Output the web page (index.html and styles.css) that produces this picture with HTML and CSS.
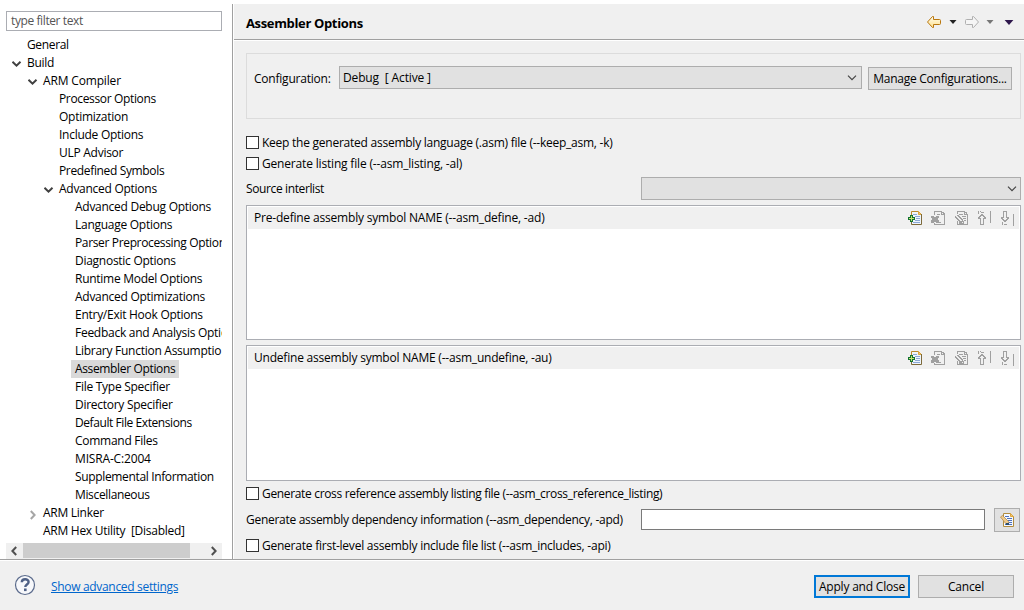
FILE: index.html
```
<!DOCTYPE html>
<html lang="en">
<head>
<meta charset="utf-8">
<title>Assembler Options</title>
<link rel="stylesheet" href="styles.css">
</head>
<body>
<svg class="defs" width="0" height="0" aria-hidden="true">
  <defs>
    <linearGradient id="gold" x1="0" y1="0" x2="0" y2="1"><stop offset="0" stop-color="#fffef0"/><stop offset="1" stop-color="#ffe08a"/></linearGradient>
    <symbol id="i-down" viewBox="0 0 10 6"><path d="M.5 .8 4.500 4.600 8.500 .8" fill="none" stroke="currentColor" stroke-width="2"/></symbol>
    <symbol id="i-combo" viewBox="0 0 10 6"><path d="M1 .7 5 4.7 9 .7" fill="none" stroke="currentColor" stroke-width="1.2"/></symbol>
    <symbol id="i-side" viewBox="0 0 6 10"><path d="M.8 1 4.6 5 .8 9" fill="none" stroke="currentColor" stroke-width="2"/></symbol>
    <symbol id="i-arrow" viewBox="0 0 16 14"><path d="M1.500 7 6.500 1.500h1v3h6q1 0 1 1v3q0 1-1 1h-6v3h-1z"/></symbol>
    <symbol id="i-tri" viewBox="0 0 8 4"><path d="M.5 0h7L4 4z" fill="currentColor"/></symbol>
    <symbol id="i-add" viewBox="-1 0 16 16">
      <path d="M3.500 1.500h7l3 3v10h-10z" fill="#eef5fd"/>
      <path d="M3.500 5V1.500h7" fill="none" stroke="#b98a2d"/><path d="M10.500 1.500v3h3z" fill="#f3c568" stroke="#dca640"/>
      <path d="M13.500 4v10.500h-10V12" fill="none" stroke="#7d6a3b"/>
      <path d="M5 4.500h4M7 6.500h5M8 8.500h4M7 10.500h5M5 12.500h7" stroke="#8ca8d4"/>
      <path d="M2 5h3v2h2v3H5v2H2v-2H0V7h2z" fill="#117131"/><path d="M3.500 6v5M1 8.500h5" stroke="#c7e36c"/>
    </symbol>
    <symbol id="i-del" viewBox="0 0 16 16" shape-rendering="crispEdges">
      <path d="M4.500 5V1.500h7M11.500 1v3.500h3M12 2h1v1h1v1h1M14.500 4v10.500h-10V13M7 4.500h3M9 12.500h2" fill="none" stroke="#a0a0a0"/>
      <path d="M1 6h3v1h2V6h3v2H8v2h1v3H6v-1H4v1H1v-3h1V8H1z" fill="#a0a0a0"/>
    </symbol>
    <symbol id="i-edit" viewBox="0 0 16 16" shape-rendering="crispEdges">
      <path d="M4.500 4V1.500h7M11.500 1v3.500h3M12 2h1v1h1M14.500 4v10.500h-10V11M6 4.500h4M9 6.500h4M10 8.500h3M11 10.500h2" fill="none" stroke="#a0a0a0"/>
      <path d="M2.500 6v1.500h1v1h1v1h1v1h1v1h1M4 5.500h1v1h1v1h1v1h1v1h1v1M7 11h3v2H6v-1h1z" fill="none" stroke="#a0a0a0"/>
      <path d="M6 11h3v2H6z" fill="#a0a0a0"/>
    </symbol>
    <symbol id="i-up" viewBox="0 0 16 16" shape-rendering="crispEdges">
      <path d="M2.500 1v3M4 1.500h1M5 2.500h3M14.500 1v12" fill="none" stroke="#a0a0a0"/>
      <path d="M5.500 4.500v1h-1v1h-1v1h-1v1h2v6h3v-6h2v-1h-1v-1h-1v-1h-1v-1z" fill="none" stroke="#a0a0a0"/>
    </symbol>
    <symbol id="i-dn" viewBox="0 0 16 16" shape-rendering="crispEdges">
      <path d="M3.500 12v3M5 14.500h3M14.500 4v12M4.500 1.500h3v6h2v1h-1v1h-1v1h-1v1h-1v-1h-1v-1h-1v-1h-1v-1h2z" fill="none" stroke="#a0a0a0"/>
    </symbol>
    <symbol id="i-note" viewBox="0 0 16 16">
      <path d="M4.500 1.500h7l3 3v10h-10z" fill="#f3f8ff" stroke="#b18c3e"/>
      <path d="M11.500 1.500v3h3z" fill="#f4cb72" stroke="#dca640"/>
      <path d="M6 4.500h4M8 6.500h5M9 8.500h4M10 10.500h3M6 12.500h7" stroke="#4d70bb"/>
      <path d="m1.500 5 2-1.500 6 6v3h-2z" fill="#edc98b" stroke="#b48b4b" stroke-width=".8"/><path d="M7 11h3v2H7z" fill="#284d70"/>
    </symbol>
  </defs>
</svg>
<div class="dialog">
  <div class="main">
    <aside class="sidebar">
      <div class="filter">type filter text</div>
      <div class="tree">
        <div class="row l0"><span class="t tight">General</span></div>
        <div class="row l0"><svg class="tw"><use href="#i-down"/></svg><span class="t">Build</span></div>
        <div class="row l1"><svg class="tw"><use href="#i-down"/></svg><span class="t wide">ARM Compiler</span></div>
        <div class="row l2"><span class="t tight">Processor Options</span></div>
        <div class="row l2"><span class="t">Optimization</span></div>
        <div class="row l2"><span class="t">Include Options</span></div>
        <div class="row l2"><span class="t">ULP Advisor</span></div>
        <div class="row l2"><span class="t tight">Predefined Symbols</span></div>
        <div class="row l2"><svg class="tw"><use href="#i-down"/></svg><span class="t">Advanced Options</span></div>
        <div class="row l3"><span class="t">Advanced Debug Options</span></div>
        <div class="row l3"><span class="t">Language Options</span></div>
        <div class="row l3"><span class="t tight">Parser Preprocessing Option</span></div>
        <div class="row l3"><span class="t">Diagnostic Options</span></div>
        <div class="row l3"><span class="t">Runtime Model Options</span></div>
        <div class="row l3"><span class="t">Advanced Optimizations</span></div>
        <div class="row l3"><span class="t">Entry/Exit Hook Options</span></div>
        <div class="row l3"><span class="t">Feedback and Analysis Options</span></div>
        <div class="row l3"><span class="t">Library Function Assumptio</span></div>
        <div class="row l3"><span class="t selected tight">Assembler Options</span></div>
        <div class="row l3"><span class="t">File Type Specifier</span></div>
        <div class="row l3"><span class="t">Directory Specifier</span></div>
        <div class="row l3"><span class="t tighter">Default File Extensions</span></div>
        <div class="row l3"><span class="t">Command Files</span></div>
        <div class="row l3"><span class="t wide">MISRA-C:2004</span></div>
        <div class="row l3"><span class="t tight">Supplemental Information</span></div>
        <div class="row l3"><span class="t tight">Miscellaneous</span></div>
        <div class="row l1"><svg class="tw closed"><use href="#i-side"/></svg><span class="t">ARM Linker</span></div>
        <div class="row l1"><span class="t">ARM Hex Utility&nbsp; [Disabled]</span></div>
      </div>
      <div class="scroll">
        <svg class="sb flip"><use href="#i-side"/></svg><div class="thumb"></div><svg class="sb end"><use href="#i-side"/></svg>
      </div>
    </aside>
    <section class="content">
      <header class="head">
        <h1>Assembler Options</h1>
        <div class="nav">
          <svg class="arrow back"><use href="#i-arrow"/></svg><svg class="tri"><use href="#i-tri"/></svg>
          <svg class="arrow fwd" viewBox="0 0 16 14"><use href="#i-arrow" transform="translate(16 0) scale(-1 1)" width="16" height="14"/></svg><svg class="tri dim"><use href="#i-tri"/></svg>
          <svg class="tri menu"><use href="#i-tri"/></svg>
        </div>
      </header>
      <div class="body">
        <div class="config">
          <span class="conf-label">Configuration:</span>
          <div class="combo conf-combo"><span>Debug&nbsp; [ Active ]</span><svg class="cv"><use href="#i-combo"/></svg></div>
          <div class="button manage">Manage Configurations...</div>
        </div>
        <div class="check first"><i></i><span class="k1">Keep the generated assembly language (.asm) file (--keep_asm, -k)</span></div>
        <div class="check"><i></i><span class="k2">Generate listing file (--asm_listing, -al)</span></div>
        <div class="source"><span>Source interlist</span><div class="combo"><svg class="cv"><use href="#i-combo"/></svg></div></div>
        <div class="list one">
          <div class="bar"><span class="k3">Pre-define assembly symbol NAME (--asm_define, -ad)</span><div class="tools"><svg><use href="#i-add"/></svg><svg><use href="#i-del"/></svg><svg><use href="#i-edit"/></svg><svg><use href="#i-up"/></svg><svg><use href="#i-dn"/></svg></div></div>
        </div>
        <div class="list two">
          <div class="bar"><span class="k4">Undefine assembly symbol NAME (--asm_undefine, -au)</span><div class="tools"><svg><use href="#i-add"/></svg><svg><use href="#i-del"/></svg><svg><use href="#i-edit"/></svg><svg><use href="#i-up"/></svg><svg><use href="#i-dn"/></svg></div></div>
        </div>
        <div class="check cross"><i></i><span class="k5">Generate cross reference assembly listing file (--asm_cross_reference_listing)</span></div>
        <div class="dep"><span class="k6">Generate assembly dependency information (--asm_dependency, -apd)</span><div class="input"></div><div class="button note"><svg><use href="#i-note"/></svg></div></div>
        <div class="check last"><i></i><span class="k7">Generate first-level assembly include file list (--asm_includes, -api)</span></div>
      </div>
    </section>
  </div>
  <footer class="foot">
    <svg class="help" viewBox="0 0 22 22"><circle cx="11" cy="11" r="9.500" fill="#f7f8fb" stroke="#5b6b8c" stroke-width="1.200"/><path d="M7.800 8.300C7.800 4.200 14.600 4.300 14.600 8c0 2.500-3.300 2.600-3.300 5" fill="none" stroke="#4f6186" stroke-width="2.400"/><rect x="10" y="14.500" width="2.600" height="2.600" fill="#4f6186"/></svg>
    <a class="link">Show advanced settings</a>
    <div class="button apply">Apply and Close</div>
    <div class="button cancel">Cancel</div>
  </footer>
</div>
</body>
</html>
```
FILE: styles.css
```
* { box-sizing: border-box; }
body { margin: 0; background: #fff; font: 12px/18px "Open Sans", "Noto Sans", sans-serif; color: #000; letter-spacing: -0.15px; white-space: nowrap; }
svg { display: block; flex: none; }
.defs { position: absolute; }
.dialog { width: 1024px; height: 610px; padding-top: 4px; display: flex; flex-direction: column; overflow: hidden; }
.main { height: 555px; display: flex; flex: none; }
.sidebar { width: 233px; padding: 7px 10px 0 6px; border-right: 1px solid #a0a0a0; }
.filter { height: 20px; border: 1px solid #abadb3; padding-left: 4px; color: #555; letter-spacing: -0.62px; word-spacing: 0.3px; }
.tree { height: 512px; padding-top: 5px; overflow: hidden; letter-spacing: -0.27px; }
.row { height: 18px; display: flex; align-items: center; justify-content: flex-start; }
.row .t { margin-left: 4px; flex: none; }
.filter { letter-spacing: -0.62px; }
.tight { letter-spacing: -0.35px; }
.tighter { letter-spacing: -0.42px; }
.wide { letter-spacing: -0.16px; }
.l0 { padding-left: 17px; }
.l1 { padding-left: 33px; }
.l2 { padding-left: 49px; }
.l3 { padding-left: 65px; }
.tw { width: 10px; height: 6px; margin: 2px 1px 0 -11px; color: #404040; }
.tw.closed { width: 6px; height: 10px; margin: 3px 3px 0 -9px; color: #a6a6a6; }
.row .selected { background: #d9d9d9; margin-left: 0; padding: 0 4px; height: 18px; }
.scroll { height: 16px; background: #f0f0f0; display: flex; align-items: center; color: #505050; }
.sb { width: 6px; height: 10px; }
.flip { transform: scaleX(-1); margin: 0 6px 0 5px; }
.end { margin-left: 21px; }
.thumb { width: 167px; height: 15px; align-self: flex-start; background: #cdcdcd; }
.content { flex: 1; min-width: 0; border-left: 1px solid #fff; background: #f0f0f0; }
.head { height: 37px; border-bottom: 1px solid #fff; box-shadow: inset 0 -1px #a0a0a0; display: flex; justify-content: space-between; padding: 0 10px 0 12px; }
.head h1 { margin: 0; font-size: 13px; line-height: 38px; font-weight: 700; letter-spacing: -0.35px; }
.nav { display: flex; height: 36px; align-items: center; color: #222; }
.arrow { width: 16px; height: 14px; }
.back { fill: url(#gold); stroke: #b9770e; }
.fwd { fill: #f5f5f5; stroke: #b0b0b0; margin-left: 7px; }
.tri { width: 8px; height: 4px; margin-left: 7px; }
.dim { color: #777; margin-left: 6px; }
.menu { width: 10px; height: 5px; margin-left: 10px; color: #2e174c; }
.body { padding: 12px 3px 0 12px; }
.config { height: 66px; border: 1px solid #dcdcdc; padding: 12px 8px 0 7px; display: flex; align-items: flex-start; }
.conf-label { width: 85px; padding-top: 4px; letter-spacing: -0.22px; }
.combo { height: 23px; border: 1px solid #adadad; background: #e1e1e1; display: flex; justify-content: space-between; line-height: 21px; padding: 0 4px 0 3px; }
.cv { width: 10px; height: 6px; margin: 8px 0 0 auto; color: #444; }
.source .cv { margin-right: -1px; }
.conf-combo { width: 523px; }
.button { height: 23px; border: 1px solid #adadad; background: #e1e1e1; display: flex; align-items: center; justify-content: center; flex: none; }
.manage { width: 144px; margin: 1px 0 0 6px; letter-spacing: -0.25px; }
.check { height: 21px; display: flex; align-items: center; }
.check i { width: 13px; height: 13px; border: 1px solid #333; background: #fff; margin-right: 3px; flex: none; }
.first { margin-top: 13px; }
.source { height: 23px; margin-top: 3px; display: flex; justify-content: space-between; line-height: 24px; letter-spacing: -0.38px; }
.source .combo { width: 380px; }
.list { border: 1px solid #abadb3; background: #fff; padding: 1px; }
.one { height: 135px; margin-top: 5px; }
.two { height: 136px; margin-top: 5px; }
.bar { height: 22px; background: #f0f0f0; display: flex; align-items: center; justify-content: space-between; padding: 0 4px 0 6px; }
.tools { display: flex; gap: 7px; }
.tools svg { width: 16px; height: 16px; }
.cross { margin-top: 2px; }
.dep { height: 24px; margin-top: 4px; display: flex; line-height: 24px; }
.k1 { letter-spacing: -0.245px; }
.k2 { letter-spacing: -0.175px; }
.k3 { letter-spacing: -0.19px; }
.k4 { letter-spacing: -0.21px; }
.k5 { letter-spacing: -0.335px; }
.k6 { width: 395px; letter-spacing: -0.29px; }
.k7 { letter-spacing: -0.235px; }
.input { width: 344px; height: 21px; margin: 1px 9px 0 0; background: #fff; border: 1px solid #7a7a7a; }
.note { width: 26px; height: 24px; }
.note svg { width: 16px; height: 16px; }
.last { margin-top: 3px; }
.foot { height: 51px; border-top: 1px solid #a0a0a0; box-shadow: inset 0 1px #fff; background: #f0f0f0; display: flex; padding: 15px 10px 0 14px; }
.help { width: 22px; height: 22px; margin-top: -1px; }
.link { color: #0066cc; text-decoration: underline; margin: 3px auto 0 15px; letter-spacing: -0.32px; }
.apply { width: 96px; border: 2px solid #0078d7; letter-spacing: -0.2px; }
.cancel { width: 96px; margin-left: 8px; }
.filter { letter-spacing: -0.4px; word-spacing: 0; }
```
